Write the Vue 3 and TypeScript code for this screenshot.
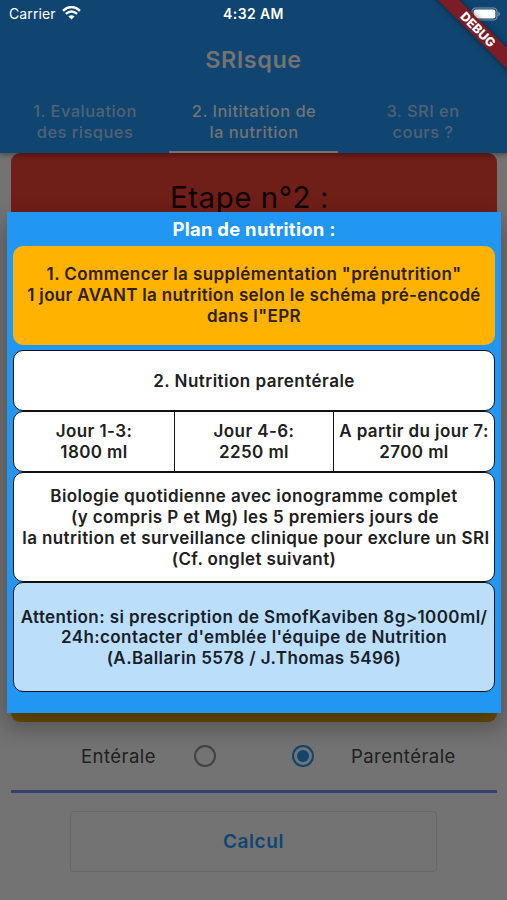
<script setup lang="ts">
import { ref } from 'vue'

interface Tab { lines: string[] }

const tabs: Tab[] = [
  { lines: ['1. Evaluation', 'des risques'] },
  { lines: ['2. Inititation de', 'la nutrition'] },
  { lines: ['3. SRI en', 'cours ?'] },
]
const activeTab = ref(1)
const route = ref<'enteral' | 'parenteral'>('parenteral')

const supplement = [
  '1. Commencer la supplémentation "prénutrition"',
  '1 jour AVANT la nutrition selon le schéma pré-encodé',
  'dans l"EPR',
]
const days = [
  ['Jour 1-3:', '1800 ml'],
  ['Jour 4-6:', '2250 ml'],
  ['A partir du jour 7:', '2700 ml'],
]
const biology = [
  'Biologie quotidienne avec ionogramme complet',
  '(y compris P et Mg) les 5 premiers jours de',
  'la nutrition et surveillance clinique pour exclure un SRI',
  '(Cf. onglet suivant)',
]
const warning = [
  'Attention: si prescription de SmofKaviben 8g>1000ml/',
  "24h:contacter d'emblée l'équipe de Nutrition",
  '(A.Ballarin 5578 / J.Thomas 5496)',
]
</script>

<template>
  <div class="screen">
    <header class="appbar">
      <div class="status">
        <div class="carrier">
          <span>Carrier</span>
          <svg class="wifi" width="19" height="14" viewBox="0 0 19 14">
            <path d="M1 4.8Q9.5-2.8 18 4.8" />
            <path d="M3.9 7.9Q9.5 2.9 15.1 7.9" />
            <path class="dot" d="M6.4 10.4Q9.5 7.9 12.6 10.4L9.5 13.5Z" />
          </svg>
        </div>
        <span class="time">4:32 AM</span>
        <svg class="battery" width="30" height="14" viewBox="0 0 30 14">
          <rect class="shell" x="1" y="1" width="25" height="12" rx="3.6" />
          <rect class="charge" x="2.6" y="2.6" width="21.8" height="8.8" rx="2.2" />
          <path class="cap" d="M27.3 4.8Q29 5.5 29 7T27.3 9.2Z" />
        </svg>
      </div>
      <h1 class="title">SRIsque</h1>
      <nav class="tabs">
        <button v-for="(tab, i) in tabs" :key="i" class="tab" :class="{ active: i === activeTab }" @click="activeTab = i">
          <span v-for="line in tab.lines" :key="line">{{ line }}</span>
        </button>
      </nav>
    </header>

    <main class="content">
      <section class="step">Etape n°2 :</section>
      <section class="amber"></section>
      <div class="choices">
        <span class="label-left">Entérale</span>
        <button class="radio" :class="{ on: route === 'enteral' }" aria-label="Entérale" @click="route = 'enteral'"></button>
        <button class="radio second" :class="{ on: route === 'parenteral' }" aria-label="Parentérale" @click="route = 'parenteral'"></button>
        <span class="label-right">Parentérale</span>
      </div>
      <hr class="divider" />
      <button class="calc">Calcul</button>
    </main>

    <div class="dialog" role="dialog">
      <h2 class="heading">Plan de nutrition :</h2>
      <section class="box orange">
        <span v-for="line in supplement" :key="line">{{ line }}</span>
      </section>
      <section class="box nutrition"><span>2. Nutrition parentérale</span></section>
      <section class="days">
        <div v-for="day in days" :key="day[0]" class="day">
          <span v-for="line in day" :key="line">{{ line }}</span>
        </div>
      </section>
      <section class="box biology">
        <span v-for="line in biology" :key="line">{{ line }}</span>
      </section>
      <section class="box warning">
        <span v-for="line in warning" :key="line">{{ line }}</span>
      </section>
    </div>

    <div class="corner"><div class="debug">DEBUG</div></div>
  </div>
</template>

<style>
body {
  background: #737373;
}
</style>

<style scoped>
.screen {
  position: relative;
  width: 507px;
  height: 900px;
  overflow: hidden;
  background: #737373;
  font-family: Inter, 'Liberation Sans', sans-serif;
  color: #202020;
}
.screen * {
  box-sizing: border-box;
}
button {
  font: inherit;
  padding: 0;
  border: 0;
  background: none;
}
span {
  white-space: nowrap;
}
.appbar {
  position: relative;
  display: flex;
  flex-direction: column;
  height: 152.5px;
  background: #0f4570;
  box-shadow: 0 2px 5px rgba(0, 0, 0, 0.35);
}
.status {
  display: grid;
  grid-template-columns: 1fr auto 1fr;
  align-items: center;
  height: 28px;
  padding: 0 6px 0 9px;
  color: #fff;
  font-size: 14px;
  line-height: 20px;
}
.carrier {
  display: flex;
  align-items: center;
  gap: 6px;
  letter-spacing: 0.1px;
}
.wifi {
  margin-top: -2px;
  fill: none;
  stroke: #fff;
  stroke-width: 2.4;
}
.wifi .dot {
  fill: #fff;
  stroke: none;
}
.time {
  margin-right: 3px;
  font-weight: 600;
  letter-spacing: 0.4px;
}
.battery {
  justify-self: end;
  margin-top: -1px;
}
.shell {
  fill: none;
  stroke: #8097aa;
  stroke-width: 1.2;
}
.charge {
  fill: #fff;
}
.cap {
  fill: #8097aa;
}
.title {
  margin: 16px 0 0;
  text-align: center;
  color: #737373;
  font-size: 23.5px;
  font-weight: 560;
  line-height: 32px;
  letter-spacing: 0.5px;
}
.tabs {
  display: grid;
  grid-template-columns: repeat(3, 1fr);
  flex: 1;
  margin-top: 14px;
}
.tab {
  display: flex;
  flex-direction: column;
  align-items: center;
  padding: 11px 0 0 1px;
  border-bottom: 2.5px solid transparent;
  color: #4f6274;
  font-size: 16.5px;
  font-weight: 500;
  line-height: 21px;
  letter-spacing: 0.45px;
}
.tab.active {
  color: #737373;
  border-color: #737373;
}
.content {
  display: flex;
  flex-direction: column;
  padding: 0 10.5px;
}
.step {
  height: 109.5px;
  padding: 26px 8px 0 0;
  border-radius: 9px 9px 0 0;
  background: #701e18;
  color: #100404;
  text-align: center;
  font-size: 29.5px;
  line-height: 36px;
  letter-spacing: 0.5px;
}
.amber {
  height: 460px;
  border-radius: 0 0 9px 9px;
  background: #6f5203;
}
.choices {
  display: flex;
  align-items: center;
  height: 68px;
  font-size: 18.5px;
  letter-spacing: 0.45px;
}
.label-left {
  width: 183px;
  padding-left: 70.5px;
}
.label-right {
  margin-left: 37.5px;
}
.radio {
  display: flex;
  align-items: center;
  justify-content: center;
  width: 22px;
  height: 22px;
  border: 2px solid #424242;
  border-radius: 50%;
}
.radio.second {
  margin-left: 76px;
}
.radio.on {
  border-color: #0f4570;
}
.radio.on::after {
  content: '';
  width: 12px;
  height: 12px;
  border-radius: 50%;
  background: #0f4570;
}
.divider {
  width: 100%;
  height: 3px;
  margin: 0;
  border: 0;
  background: #2f4272;
}
.calc {
  align-self: center;
  width: 367px;
  height: 61px;
  margin-top: 18px;
  border: 1px solid #666;
  border-radius: 4px;
  color: #0f4570;
  font-size: 19px;
  font-weight: 600;
  letter-spacing: 0.55px;
}
.dialog {
  position: absolute;
  left: 7px;
  top: 212px;
  display: flex;
  flex-direction: column;
  width: 494px;
  height: 501px;
  padding: 0 6px;
  background: #2196f3;
  box-shadow: 0 12px 22px 2px rgba(0, 0, 0, 0.3);
  font-size: 17px;
  font-weight: 600;
  line-height: 20.8px;
  letter-spacing: 0.4px;
}
.heading {
  margin: 0;
  height: 34px;
  color: #fff;
  text-align: center;
  font-size: 18.5px;
  font-weight: 700;
  line-height: 35px;
  letter-spacing: 0.25px;
}
.box {
  display: flex;
  flex-direction: column;
  align-items: center;
  justify-content: center;
  padding-top: 1.5px;
  border: 1.5px solid #111;
  border-radius: 10px;
  background: #fff;
}
.orange {
  height: 99px;
  margin-bottom: 5px;
  padding-top: 0;
  border: 0;
  background: #ffb300;
  color: #2c2000;
}
.orange span:nth-child(2) {
  letter-spacing: 0.34px;
}
.nutrition {
  height: 61px;
  letter-spacing: 0.48px;
}
.days {
  display: grid;
  grid-template-columns: 160px 159px 1fr;
  height: 61px;
  border: 1px solid #111;
  border-radius: 10px;
  background: #fff;
}
.day {
  display: flex;
  flex-direction: column;
  align-items: center;
  justify-content: center;
}
.day + .day {
  border-left: 1px solid #111;
}
.biology {
  height: 110px;
}
.biology span:nth-child(2) {
  padding-left: 2px;
}
.biology span:nth-child(3) {
  padding-left: 4px;
}
.warning {
  height: 110px;
  background: #bbdefb;
  color: #182028;
}
.corner {
  position: absolute;
  top: 0;
  right: 0;
  width: 75px;
  height: 75px;
  overflow: hidden;
}
.debug {
  position: absolute;
  left: -19px;
  top: 22px;
  width: 130px;
  height: 15px;
  transform: rotate(45deg);
  background: #7b1c27;
  box-shadow: 0 0 6px rgba(0, 0, 0, 0.5);
  color: #fff;
  text-align: center;
  font-size: 12.5px;
  font-weight: 800;
  line-height: 15px;
}
</style>
